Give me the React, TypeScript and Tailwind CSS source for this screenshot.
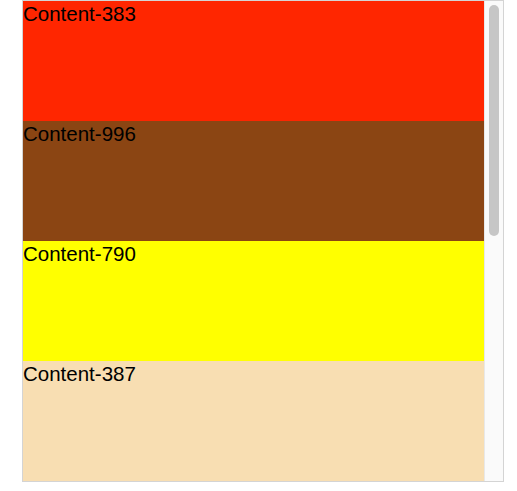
const items = [
    { id: 383, color: 'bg-[#ff2600]' },
    { id: 996, color: 'bg-[#8b4513]' },
    { id: 790, color: 'bg-[#ffff00]' },
    { id: 387, color: 'bg-[#f8deb2]' },
];

export default function App() {
    return (
        <div className="w-[517px] h-[491px] bg-white font-['Liberation_Sans',Arial,sans-serif]">
            {/* Scroll list with drawn scrollbar */}
            <div className="ml-[22px] w-[482px] h-[482px] border border-[#d4d4d4] flex">
                <div className="flex-1 overflow-hidden">
                    {items.map((item) => (
                        <div key={item.id} className={`h-[120px] ${item.color}`}>
                            <span className="text-[20.5px] leading-[25px] text-black">Content-{item.id}</span>
                        </div>
                    ))}
                </div>
                <div className="w-[19px] shrink-0 bg-[#fafafa] border-l border-[#e8e8e8] px-[4px] pt-[4px]">
                    <div className="h-[231px] rounded-full bg-[#c6c6c6]" />
                </div>
            </div>
        </div>
    );
}
